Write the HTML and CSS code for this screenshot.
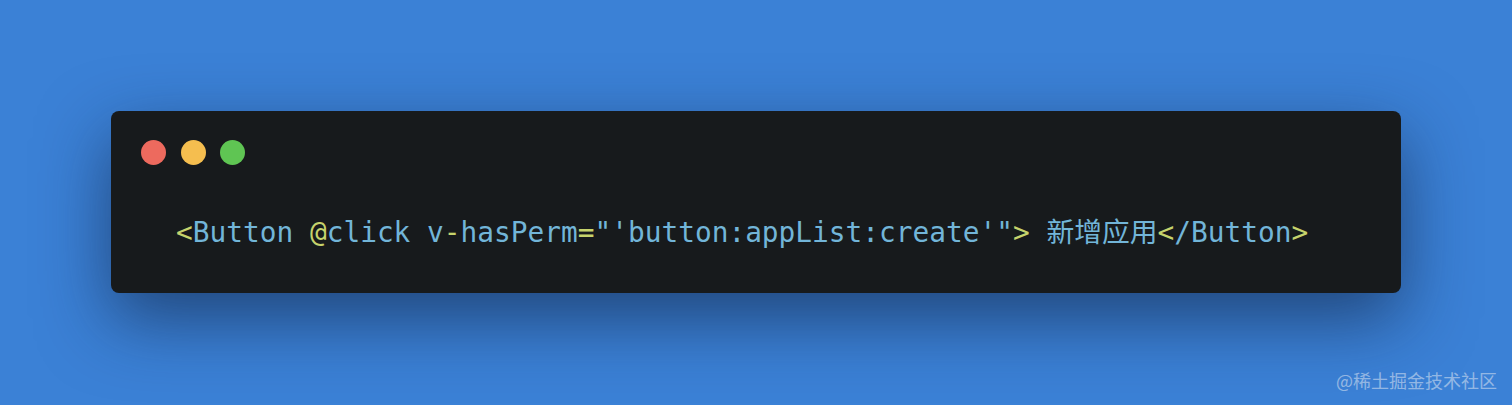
FILE: index.html
```html
<!DOCTYPE HTML>
<html>
<head>
  <title>code snippet</title>
  <meta name="viewport" content="width=device-width, initial-scale=1">
  <link rel="stylesheet" href="styles.css">
</head>

<body>

<div class="frame">
  <div class="window">
    <div class="dots">
      <span class="dot red"></span>
      <span class="dot yellow"></span>
      <span class="dot green"></span>
    </div>
    <pre class="code"><span class="p">&lt;</span><span class="t">Button</span> <span class="p">@</span><span class="t">click</span> <span class="t">v</span><span class="p">-</span><span class="t">hasPerm</span><span class="p">=</span><span class="t">"'button:appList:create'"</span><span class="p">&gt;</span> <span class="t">新增应用</span><span class="p">&lt;</span><span class="t">/Button</span><span class="p">&gt;</span></pre>
  </div>
</div>

<div class="mark">@稀土掘金技术社区</div>

</body>
</html>
```

FILE: styles.css
```css
html, body {
  margin: 0;
  padding: 0;
}

body {
  background-color: #3b81d6;
  width: 1512px;
  height: 405px;
  overflow: hidden;
  position: relative;
}

.frame {
  padding: 111px;
}

.window {
  background-color: #171a1c;
  border-radius: 8px;
  padding: 29px 30px 40px 30px;
  box-shadow: 0 26px 70px rgba(15, 30, 60, 0.6);
}

.dots {
  display: flex;
  gap: 14.5px;
  height: 25px;
}

.dot {
  width: 25px;
  height: 25px;
  border-radius: 50%;
  display: inline-block;
}

.red { background-color: #ed6a5e; }
.yellow { background-color: #f5be4f; }
.green { background-color: #5fc553; }

.code {
  margin: 48px 0 0 35px;
  font-family: "DejaVu Sans Mono", "Noto Sans CJK SC", monospace;
  font-size: 27.8px;
  line-height: 40px;
  color: #72b5d8;
}

.p { color: #c6d36c; }
.t { color: #72b5d8; }

.mark {
  position: absolute;
  right: 15px;
  bottom: 14px;
  font-family: "Noto Sans CJK SC", sans-serif;
  font-size: 18px;
  line-height: 22px;
  color: rgba(225, 232, 242, 0.55);
}
```
